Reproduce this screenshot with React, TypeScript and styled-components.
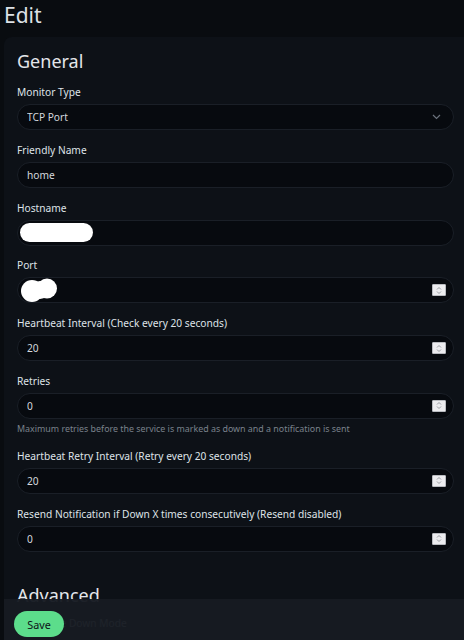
import React from "react";
import styled, { createGlobalStyle } from "styled-components";

const Global = createGlobalStyle`
  html, body { margin: 0; padding: 0; background: #090c10; }
  body { font-family: "Noto Sans", "Open Sans", sans-serif; color: #dfe3e8; }
  * { box-sizing: border-box; }
`;

const Screen = styled.div`
  position: relative;
  width: 464px;
  height: 640px;
  overflow: hidden;
  background: #090c10;
`;

const PageTitle = styled.h1`
  margin: 0;
  padding-left: 4px;
  font-size: 21px;
  line-height: 30px;
  font-weight: 400;
  color: #dde1e6;
`;

const Card = styled.div`
  margin: 7px 0 0 4px;
  background: #0d1117;
  border-top-left-radius: 8px;
  padding: 12px 10px 40px 13px;
  min-height: 700px;
`;

const SectionTitle = styled.h2<{ $top?: number; $bottom?: number }>`
  margin: ${(p) => p.$top ?? 0}px 0 ${(p) => p.$bottom ?? 11}px 0;
  font-size: 18px;
  line-height: 24px;
  font-weight: 400;
  color: #e3e6eb;
`;

const Field = styled.div`
  margin-bottom: 11.8px;
`;

const Label = styled.label`
  display: block;
  font-size: 10.2px;
  line-height: 16px;
  color: #dfe3e8;
  margin-bottom: 4px;
`;

const Shell = styled.div<{ $lead?: number }>`
  display: flex;
  align-items: center;
  height: 26px;
  border-radius: 13px;
  background: #070a0f;
  border: 1px solid #1a1f27;
  padding: 0 7px 0 ${(p) => p.$lead ?? 9}px;
`;

const TextInput = styled.input`
  flex: 1;
  min-width: 0;
  border: 0;
  outline: none;
  background: transparent;
  color: #d4d8de;
  font-family: inherit;
  font-size: 10.2px;
  padding: 0;
`;

const Select = styled.select`
  flex: 1;
  min-width: 0;
  appearance: none;
  border: 0;
  outline: none;
  background: transparent;
  color: #d4d8de;
  font-family: inherit;
  font-size: 10.2px;
  padding: 0;
`;

const Chevron = styled.svg`
  width: 9px;
  height: 6px;
  margin-right: 5px;
  flex: none;
`;

const Spinner = styled.span`
  flex: none;
  width: 14px;
  height: 12px;
  display: flex;
  align-items: center;
  justify-content: center;
  background: #ececef;
  border: 1px solid #b9bbc0;
  border-radius: 1px;
`;

const HelpText = styled.div`
  margin-top: 3px;
  font-size: 8.9px;
  line-height: 14px;
  color: #7a818b;
`;

const HostBlob = styled.span`
  display: block;
  width: 73px;
  height: 19px;
  border-radius: 10px;
  background: #ffffff;
  flex: none;
`;

const PortBlob = styled.svg`
  width: 38px;
  height: 24px;
  flex: none;
`;

const CheckRow = styled.div`
  display: flex;
  align-items: center;
  gap: 4px;
  height: 16px;
`;

const CheckBox = styled.span`
  width: 12px;
  height: 12px;
  border-radius: 3px;
  border: 1px solid #3a414c;
  background: #070a0f;
`;

const CheckLabel = styled.span`
  font-size: 10.2px;
  color: #dfe3e8;
`;

const Footer = styled.div`
  position: absolute;
  left: 4px;
  right: 0;
  bottom: 0;
  height: 41px;
  background: rgba(23, 27, 34, 0.965);
  display: flex;
  align-items: flex-start;
  padding: 12px 10px 0;
`;

const SaveButton = styled.button`
  width: 50px;
  height: 26px;
  border-radius: 13px;
  border: 0;
  background: #5cdd8b;
  color: #0d1117;
  font-family: inherit;
  font-size: 10.8px;
  padding: 0;
  cursor: pointer;
`;

const SpinIcon = () => (
  <svg width="8" height="9" viewBox="0 0 8 9">
    <path d="M2 3.5 L4 1.5 L6 3.5" fill="none" stroke="#9a9ca2" strokeWidth="1" />
    <path d="M2 5.5 L4 7.5 L6 5.5" fill="none" stroke="#9a9ca2" strokeWidth="1" />
  </svg>
);

const NumberField = ({ label, value, help, children }: { label: string; value?: string; help?: string; children?: React.ReactNode }) => (
  <Field>
    <Label>{label}</Label>
    <Shell $lead={children ? 2 : 9}>
      {children}
      <TextInput defaultValue={value ?? ""} />
      <Spinner>
        <SpinIcon />
      </Spinner>
    </Shell>
    {help && <HelpText>{help}</HelpText>}
  </Field>
);

export default function App() {
  return (
    <Screen>
      <Global />
      <PageTitle>Edit</PageTitle>
      <Card>
        <SectionTitle>General</SectionTitle>
        <Field>
          <Label>Monitor Type</Label>
          <Shell>
            <Select defaultValue="port">
              <option value="port">TCP Port</option>
            </Select>
            <Chevron viewBox="0 0 9 6">
              <path d="M1 1 L4.5 4.5 L8 1" fill="none" stroke="#6b727d" strokeWidth="1.2" />
            </Chevron>
          </Shell>
        </Field>
        <Field>
          <Label>Friendly Name</Label>
          <Shell>
            <TextInput defaultValue="home" />
          </Shell>
        </Field>
        <Field>
          <Label>Hostname</Label>
          <Shell $lead={2}>
            <HostBlob />
            <TextInput />
          </Shell>
        </Field>
        <NumberField label="Port">
          <PortBlob viewBox="0 0 38 24">
            <circle cx="12" cy="13" r="11" fill="#fff" />
            <circle cx="27" cy="10.5" r="10" fill="#fff" />
            <ellipse cx="20" cy="12" rx="9" ry="9" fill="#fff" />
          </PortBlob>
        </NumberField>
        <NumberField label="Heartbeat Interval (Check every 20 seconds)" value="20" />
        <NumberField
          label="Retries"
          value="0"
          help="Maximum retries before the service is marked as down and a notification is sent"
        />
        <NumberField label="Heartbeat Retry Interval (Retry every 20 seconds)" value="20" />
        <NumberField label="Resend Notification if Down X times consecutively (Resend disabled)" value="0" />
        <SectionTitle $top={31} $bottom={8}>Advanced</SectionTitle>
        <CheckRow>
          <CheckBox />
          <CheckLabel>Upside Down Mode</CheckLabel>
        </CheckRow>
      </Card>
      <Footer>
        <SaveButton>Save</SaveButton>
      </Footer>
    </Screen>
  );
}
